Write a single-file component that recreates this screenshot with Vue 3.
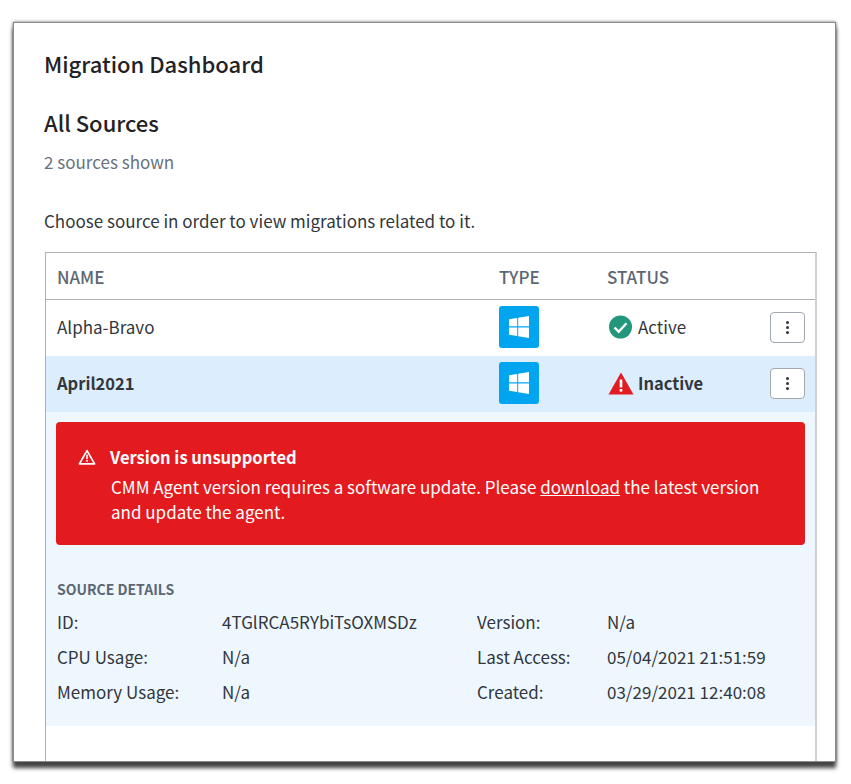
<template>
  <div class="page">
    <div class="window">
      <h1 class="pageTitle">Migration Dashboard</h1>
      <h2 class="sectionTitle">All Sources</h2>
      <p class="shown">2 sources shown</p>
      <p class="hint">Choose source in order to view migrations related to it.</p>

      <div class="table">
        <div class="row head">
          <span>NAME</span>
          <span>TYPE</span>
          <span>STATUS</span>
        </div>

        <div
          v-for="source in sources"
          :key="source.name"
          class="row item"
          :class="{ selected: source.selected }"
        >
          <span class="name">{{ source.name }}</span>
          <span class="typeIcon">
            <svg viewBox="0 0 20 20" width="20" height="22" preserveAspectRatio="none">
              <path fill="#fff" d="M0 3l8.2-1.2v7.6H0zM9.2 1.7L20 0v9.4H9.2zM0 10.5h8.2v7.7L0 17zM9.2 10.5H20V20L9.2 18.4z" />
            </svg>
          </span>
          <span class="status">
            <svg v-if="source.selected" viewBox="0 0 26 24" width="26" height="24">
              <path fill="#e31b23" d="M13 1.5L25.5 23.5H.5z" />
              <rect x="11.7" y="8.5" width="2.6" height="8" fill="#fff" />
              <rect x="11.7" y="18" width="2.6" height="2.6" fill="#fff" />
            </svg>
            <svg v-else viewBox="0 0 26 24" width="26" height="24">
              <circle cx="12.5" cy="12" r="11.5" fill="#23967b" />
              <path d="M6.5 12.5l4.2 4.2L18.5 8.3" fill="none" stroke="#fff" stroke-width="2.4" />
            </svg>
            {{ source.status }}
          </span>
          <button class="menuBtn">
            <i></i><i></i><i></i>
          </button>
        </div>

        <div class="details">
          <div class="alert">
            <svg class="alertIcon" viewBox="0 0 18 16" width="18" height="16">
              <path fill="none" stroke="#fff" stroke-width="1.7" stroke-linejoin="round" d="M9 1.6L16.6 14.8H1.4z" />
              <rect x="8.2" y="5.6" width="1.6" height="4.6" fill="#fff" />
              <rect x="8.2" y="11" width="1.6" height="1.7" fill="#fff" />
            </svg>
            <div>
              <div class="alertTitle">Version is unsupported</div>
              <div class="alertText first">
                CMM Agent version requires a software update. Please
                <a class="alertLink">download</a> the latest version
              </div>
              <div class="alertText">and update the agent.</div>
            </div>
          </div>

          <div class="detailsTitle">SOURCE DETAILS</div>
          <div class="detailGrid">
            <template v-for="d in details" :key="d.label">
              <span>{{ d.label }}</span>
              <span>{{ d.value }}</span>
              <span>{{ d.label2 }}</span>
              <span>{{ d.value2 }}</span>
            </template>
          </div>
        </div>
      </div>
    </div>
  </div>
</template>

<script setup>
const sources = [
  { name: 'Alpha-Bravo', status: 'Active', selected: false },
  { name: 'April2021', status: 'Inactive', selected: true }
]

const details = [
  { label: 'ID:', value: '4TGlRCA5RYbiTsOXMSDz', label2: 'Version:', value2: 'N/a' },
  { label: 'CPU Usage:', value: 'N/a', label2: 'Last Access:', value2: '05/04/2021 21:51:59' },
  { label: 'Memory Usage:', value: 'N/a', label2: 'Created:', value2: '03/29/2021 12:40:08' }
]
</script>

<style scoped>
.page {
  box-sizing: border-box;
  height: 784px;
  padding: 22px 0 0 13px;
  overflow: hidden;
  background: #fff;
}

.window {
  box-sizing: border-box;
  width: 823px;
  height: 740px;
  padding: 0 18px 0 30px;
  overflow: hidden;
  background: #fff;
  border: 1px solid #8a8a8a;
  box-shadow: 0 6px 4px #444, 0 0 3px #666;
  font-family: "Noto Sans CJK SC", "Liberation Sans", sans-serif;
  color: #32373d;
  font-size: 17px;
  line-height: 24px;
}

.pageTitle {
  margin: 27px 0 0;
  font-size: 22px;
  line-height: 26px;
  font-weight: 500;
  color: #1f2226;
}

.sectionTitle {
  margin: 33px 0 0;
  font-size: 22px;
  line-height: 26px;
  font-weight: 500;
  color: #1f2226;
}

.shown {
  margin: 15px 0 0;
  color: #67727e;
}

.hint {
  margin: 35px 0 0;
}

.table {
  box-sizing: border-box;
  margin: 19px 0 0 1px;
  height: 600px;
  border: 1px solid #b0b0b0;
  border-right: 2px solid #d0d0d0;
}

.row {
  display: grid;
  grid-template-columns: 442px 108px 1fr 35px;
  align-items: center;
  padding: 0 10px 0 11px;
}

.head {
  box-sizing: border-box;
  height: 47px;
  padding-top: 2px;
  border-bottom: 1px solid #b0b0b0;
  color: #5c6773;
  font-weight: 500;
}

.item {
  box-sizing: border-box;
  height: 56px;
  padding-bottom: 2px;
}

.selected {
  background: #dcedfd;
}

.selected .name,
.selected .status {
  font-weight: 700;
  font-size: 16.5px;
}

.typeIcon {
  width: 40px;
  height: 42px;
  border-radius: 3px;
  background: #00a4ef;
  display: flex;
  align-items: center;
  justify-content: center;
}

.status {
  display: flex;
  align-items: center;
  gap: 4px;
  padding-left: 1px;
}

.menuBtn {
  box-sizing: border-box;
  width: 35px;
  height: 31px;
  padding: 0;
  border: 1px solid #a3a9b0;
  border-radius: 4px;
  background: #fff;
  display: flex;
  flex-direction: column;
  align-items: center;
  justify-content: center;
  gap: 2px;
}

.menuBtn i {
  width: 3px;
  height: 3px;
  border-radius: 50%;
  background: #32373d;
}

.details {
  box-sizing: border-box;
  height: 314px;
  padding: 10px 10px 0;
  background: #eef6fe;
}

.alert {
  box-sizing: border-box;
  height: 123px;
  padding: 23px 30px 0 22px;
  display: flex;
  gap: 15px;
  border-radius: 4px;
  background: #e31b1f;
  color: #fff;
}

.alertIcon {
  flex: none;
  margin-top: 4px;
}

.alertTitle {
  margin-left: -1px;
  font-weight: 700;
  font-size: 16.5px;
}

.alertText {
  line-height: 25px;
}

.alertText.first {
  margin-top: 5px;
}

.alertLink {
  text-decoration: underline;
}

.detailsTitle {
  margin: 34px 0 0 1px;
  font-size: 14px;
  line-height: 20px;
  font-weight: 700;
  color: #5c6773;
}

.detailGrid {
  margin: 5px 0 0 1px;
  display: grid;
  grid-template-columns: 165px 255px 130px 1fr;
  grid-auto-rows: 35px;
  align-items: center;
}
</style>

<style>
html, body {
  background: #fff;
}
</style>
